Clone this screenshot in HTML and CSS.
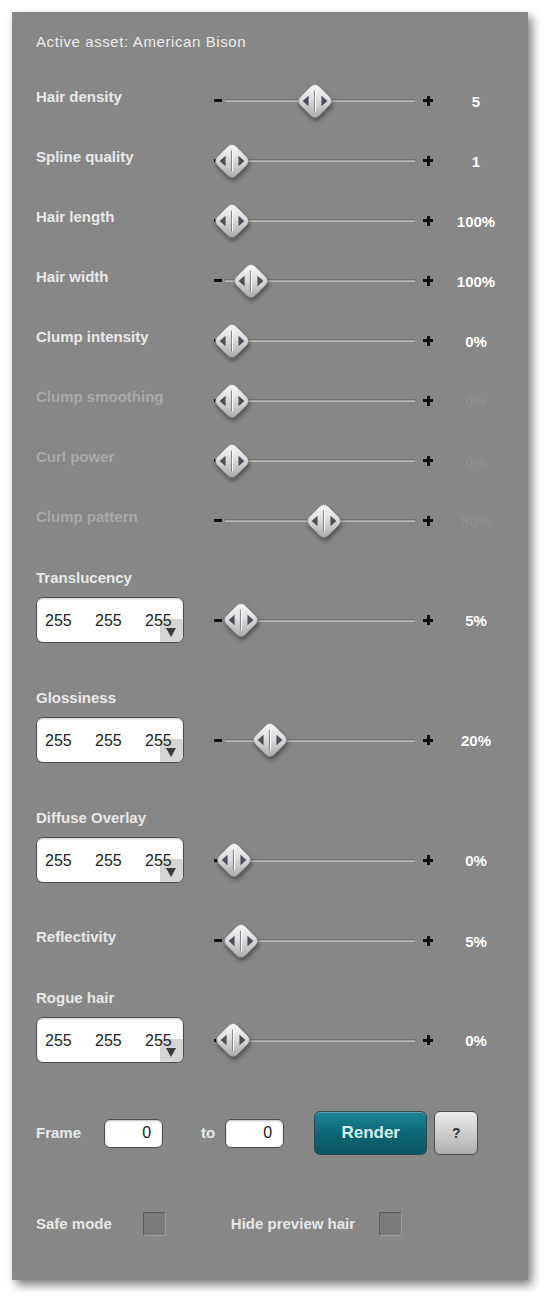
FILE: index.html
```html
<!DOCTYPE html>
<html lang="en">
<head>
    <meta charset="UTF-8">
    <title>Hair settings</title>
    <link rel="stylesheet" href="styles.css">
</head>
<body>
    <svg class="defs" width="0" height="0">
        <defs>
            <linearGradient id="knob_fill" x1="0" y1="0" x2="1" y2="1">
                <stop offset="0" stop-color="#fbfbfb"/>
                <stop offset="0.45" stop-color="#dedede"/>
                <stop offset="1" stop-color="#a4a4a4"/>
            </linearGradient>
            <symbol id="knob" viewBox="0 0 40 40">
                <rect x="6" y="6" width="28" height="28" rx="6" transform="rotate(45 20 20)" fill="url(#knob_fill)" stroke="#8c8c8c" stroke-width="0.8"/>
                <path d="M7 20 L13.2 14.6 V25.4 Z" fill="#4a4f57"/>
                <path d="M33 20 L26.8 14.6 V25.4 Z" fill="#4a4f57"/>
                <path d="M19.4 9 V31" stroke="#7c7c7c" stroke-width="1"/>
                <path d="M20.6 9 V31" stroke="#ffffff" stroke-width="1"/>
            </symbol>
        </defs>
    </svg>

    <div id="panel">
        <div class="asset">Active asset: American Bison</div>

        <div class="row">
            <span class="label">Hair density</span>
            <div class="slider"><span class="minus"></span><span class="track"></span><span class="plus"></span><svg class="thumb" style="left:84px"><use href="#knob"/></svg></div>
            <span class="value">5</span>
        </div>
        <div class="row">
            <span class="label">Spline quality</span>
            <div class="slider"><span class="minus"></span><span class="track"></span><span class="plus"></span><svg class="thumb" style="left:1px"><use href="#knob"/></svg></div>
            <span class="value">1</span>
        </div>
        <div class="row">
            <span class="label">Hair length</span>
            <div class="slider"><span class="minus"></span><span class="track"></span><span class="plus"></span><svg class="thumb" style="left:1px"><use href="#knob"/></svg></div>
            <span class="value">100%</span>
        </div>
        <div class="row">
            <span class="label">Hair width</span>
            <div class="slider"><span class="minus"></span><span class="track"></span><span class="plus"></span><svg class="thumb" style="left:20px"><use href="#knob"/></svg></div>
            <span class="value">100%</span>
        </div>
        <div class="row">
            <span class="label">Clump intensity</span>
            <div class="slider"><span class="minus"></span><span class="track"></span><span class="plus"></span><svg class="thumb" style="left:1px"><use href="#knob"/></svg></div>
            <span class="value">0%</span>
        </div>
        <div class="row off">
            <span class="label">Clump smoothing</span>
            <div class="slider"><span class="minus"></span><span class="track"></span><span class="plus"></span><svg class="thumb" style="left:1px"><use href="#knob"/></svg></div>
            <span class="value">0%</span>
        </div>
        <div class="row off">
            <span class="label">Curl power</span>
            <div class="slider"><span class="minus"></span><span class="track"></span><span class="plus"></span><svg class="thumb" style="left:1px"><use href="#knob"/></svg></div>
            <span class="value">0%</span>
        </div>
        <div class="row off">
            <span class="label">Clump pattern</span>
            <div class="slider"><span class="minus"></span><span class="track"></span><span class="plus"></span><svg class="thumb" style="left:93px"><use href="#knob"/></svg></div>
            <span class="value">50%</span>
        </div>

        <div class="color_row">
            <span class="label">Translucency</span>
            <div class="rgb"><span>255</span><span>255</span><span>255</span><i class="drop"></i></div>
            <div class="slider"><span class="minus"></span><span class="track"></span><span class="plus"></span><svg class="thumb" style="left:10px"><use href="#knob"/></svg></div>
            <span class="value">5%</span>
        </div>
        <div class="color_row">
            <span class="label">Glossiness</span>
            <div class="rgb"><span>255</span><span>255</span><span>255</span><i class="drop"></i></div>
            <div class="slider"><span class="minus"></span><span class="track"></span><span class="plus"></span><svg class="thumb" style="left:39px"><use href="#knob"/></svg></div>
            <span class="value">20%</span>
        </div>
        <div class="color_row">
            <span class="label">Diffuse Overlay</span>
            <div class="rgb"><span>255</span><span>255</span><span>255</span><i class="drop"></i></div>
            <div class="slider"><span class="minus"></span><span class="track"></span><span class="plus"></span><svg class="thumb" style="left:3px"><use href="#knob"/></svg></div>
            <span class="value">0%</span>
        </div>
        <div class="row">
            <span class="label">Reflectivity</span>
            <div class="slider"><span class="minus"></span><span class="track"></span><span class="plus"></span><svg class="thumb" style="left:10px"><use href="#knob"/></svg></div>
            <span class="value">5%</span>
        </div>
        <div class="color_row">
            <span class="label">Rogue hair</span>
            <div class="rgb"><span>255</span><span>255</span><span>255</span><i class="drop"></i></div>
            <div class="slider"><span class="minus"></span><span class="track"></span><span class="plus"></span><svg class="thumb" style="left:2px"><use href="#knob"/></svg></div>
            <span class="value">0%</span>
        </div>

        <div id="render_row">
            <span class="label">Frame</span>
            <input type="text" class="frame_input" id="frame_from" value="0">
            <span class="label to">to</span>
            <input type="text" class="frame_input" id="frame_to" value="0">
            <button id="render_btn">Render</button>
            <button id="help_btn">?</button>
        </div>

        <div id="options">
            <span class="label">Safe mode</span>
            <span class="check" id="safe_mode"></span>
            <span class="label hide_label">Hide preview hair</span>
            <span class="check"></span>
        </div>
    </div>
</body>
</html>
```

FILE: styles.css
```css
* {
    margin: 0;
    padding: 0;
    box-sizing: border-box;
}

body {
    background: #ffffff;
    padding: 12px;
    font-family: "Liberation Sans", Arial, sans-serif;
}

.defs {
    display: block;
    width: 0;
    height: 0;
}

#panel {
    width: 516px;
    height: 1268px;
    padding: 20px 9px 0 24px;
    background-color: #878787;
    box-shadow: 4px 5px 9px rgba(0, 0, 0, 0.5);
}

.asset {
    font-size: 15px;
    line-height: 20px;
    letter-spacing: 0.6px;
    color: #ececec;
    margin-bottom: 16px;
}

.label {
    font-size: 15px;
    font-weight: bold;
    line-height: 20px;
    color: #e8e8e8;
}

.value {
    font-size: 15px;
    font-weight: bold;
    line-height: 20px;
    text-align: center;
    color: #ffffff;
}

.row {
    height: 60px;
    display: grid;
    grid-template-columns: 176px 221px 86px;
    align-items: center;
}

.row > .label {
    margin-bottom: 2px;
}

.row > .slider {
    margin-top: 5px;
}

.row > .value {
    margin-top: 8px;
}

.off .label {
    color: #a9a9a9;
}

.off .value {
    color: #8f8f8f;
}

/* slider */
.slider {
    position: relative;
    height: 40px;
    display: flex;
    align-items: center;
}

.minus {
    width: 8px;
    height: 3px;
    margin-left: 2px;
    background-color: #111;
}

.track {
    flex: 1;
    height: 3px;
    margin: 0 8px 0 3px;
    border-top: 1px solid #727272;
    border-bottom: 1px solid #b8b8b8;
    background-color: #a2a2a2;
}

.plus {
    position: relative;
    width: 10px;
    height: 10px;
}

.plus::before, .plus::after {
    content: "";
    position: absolute;
    background-color: #111;
}

.plus::before {
    left: 0;
    top: 3.5px;
    width: 10px;
    height: 3px;
}

.plus::after {
    left: 3.5px;
    top: 0;
    width: 3px;
    height: 10px;
}

.thumb {
    position: absolute;
    top: 1px;
    width: 38px;
    height: 38px;
    filter: drop-shadow(1px 3px 2px rgba(0, 0, 0, 0.4));
}

/* colour rows */
.color_row {
    display: grid;
    grid-template-columns: 176px 221px 86px;
    grid-template-rows: 20px 46px;
    row-gap: 9px;
    align-items: center;
    padding: 20px 0 25px;
}

.color_row > .label {
    grid-column: 1 / 4;
}

.color_row > .value {
    margin-top: 2px;
}

.rgb {
    position: relative;
    width: 148px;
    height: 46px;
    padding-left: 8px;
    display: flex;
    align-items: center;
    border: 1px solid #4e4e4e;
    border-radius: 7px;
    overflow: hidden;
    background-color: #ffffff;
    box-shadow: inset 0 1px 2px rgba(0, 0, 0, 0.2);
}

.rgb > span {
    position: relative;
    z-index: 1;
    flex-shrink: 0;
    width: 50px;
    font-size: 16px;
    color: #222;
    margin-top: 2px;
}

.drop {
    position: absolute;
    z-index: 0;
    right: 0;
    bottom: 0;
    width: 23px;
    height: 23px;
    background-color: #d5d5d5;
}

.drop::after {
    content: "";
    position: absolute;
    left: 6px;
    top: 9px;
    border-left: 5.5px solid transparent;
    border-right: 5.5px solid transparent;
    border-top: 9px solid #3a3a3a;
}

/* frame / render */
#render_row {
    height: 44px;
    margin-top: 23px;
    display: flex;
    align-items: center;
}

.frame_input {
    width: 59px;
    height: 29px;
    margin-left: 23px;
    padding-right: 11px;
    border: 1px solid #4c4c4c;
    border-radius: 6px;
    background-color: #ffffff;
    box-shadow: inset 0 1px 2px rgba(0, 0, 0, 0.25);
    font-family: "Liberation Sans", Arial, sans-serif;
    font-size: 16px;
    color: #222;
    text-align: right;
    outline: none;
}

.to {
    margin-left: 38px;
}

#frame_to {
    margin-left: 10px;
}

#render_btn {
    width: 113px;
    height: 44px;
    margin-left: 30px;
    border: 1px solid #34484c;
    border-radius: 6px;
    background: linear-gradient(#1d8594, #0c6572 55%, #0a5562);
    box-shadow: inset 0 1px 0 rgba(255, 255, 255, 0.25);
    font-family: "Liberation Sans", Arial, sans-serif;
    font-size: 17px;
    font-weight: bold;
    color: #d4edf1;
}

#help_btn {
    width: 44px;
    height: 44px;
    margin-left: 7px;
    border: 1px solid #4d4d4d;
    border-radius: 6px;
    background: linear-gradient(#ebebeb, #c8c8c8 60%, #adadad);
    font-family: "Liberation Sans", Arial, sans-serif;
    font-size: 14px;
    font-weight: bold;
    color: #333;
}

/* options */
#options {
    height: 24px;
    margin-top: 57px;
    display: flex;
    align-items: center;
}

.check {
    width: 23px;
    height: 24px;
    margin-left: 24px;
    border: 1px solid #5e5e5e;
    border-right-color: #9c9c9c;
    border-bottom-color: #9c9c9c;
    border-radius: 2px;
    background-color: #7b7b7b;
}

#safe_mode {
    margin-left: 31px;
}

.hide_label {
    margin-left: 65px;
}
```
